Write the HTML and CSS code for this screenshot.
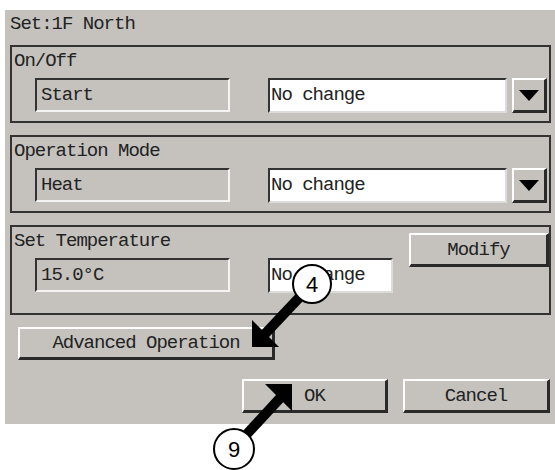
FILE: index.html
```html
<!DOCTYPE html>
<html lang="en">
<head>
    <meta charset="UTF-8">
    <title>Set: 1F North</title>
    <link rel="stylesheet" href="styles.css">
</head>
<body>
    <div class="screen">
        <div class="title">Set:1F North</div>

        <div class="group">
            <div class="group-label">On/Off</div>
            <div class="row">
                <div class="status">Start</div>
                <div class="select">No change</div>
                <div class="drop"><span class="tri"></span></div>
            </div>
        </div>

        <div class="group">
            <div class="group-label">Operation Mode</div>
            <div class="row">
                <div class="status">Heat</div>
                <div class="select">No change</div>
                <div class="drop"><span class="tri"></span></div>
            </div>
        </div>

        <div class="group group-temp">
            <div class="temp-main">
                <div class="group-label">Set Temperature</div>
                <div class="row">
                    <div class="status">15.0°C</div>
                    <div class="select select-short">No change</div>
                </div>
            </div>
            <button type="button" class="btn btn-modify">Modify</button>
        </div>

        <button type="button" class="btn btn-advanced">Advanced Operation</button>

        <div class="actions">
            <button type="button" class="btn btn-ok">OK</button>
            <button type="button" class="btn btn-cancel">Cancel</button>
        </div>
    </div>

    <!-- step callouts drawn over the screen -->
    <svg class="callouts" width="555" height="470" viewBox="0 0 555 470">
        <line x1="312" y1="284" x2="264" y2="335" stroke="#000" stroke-width="10"/>
        <polygon points="252,347 252,320 279,347" fill="#000"/>
        <circle cx="312" cy="284" r="19" fill="#fff" stroke="#000" stroke-width="2"/>
        <text x="312" y="292" text-anchor="middle" class="callout-num">4</text>

        <line x1="234" y1="448" x2="282" y2="396" stroke="#000" stroke-width="10"/>
        <polygon points="292,384 265,384 292,411" fill="#000"/>
        <circle cx="234" cy="449" r="20" fill="#fff" stroke="#000" stroke-width="2"/>
        <text x="234" y="457" text-anchor="middle" class="callout-num">9</text>
    </svg>
</body>
</html>
```

FILE: styles.css
```css
* {
    box-sizing: border-box;
}

body {
    margin: 0;
    background-color: #ffffff;
    position: relative;
    width: 555px;
    height: 470px;
    overflow: hidden;
    font-family: 'Liberation Mono', 'DejaVu Sans Mono', monospace;
    font-size: 19px;
    letter-spacing: -1px;
    color: #222222;
}

.screen {
    margin: 10px 0 0 5px;
    width: 550px;
    height: 414px;
    padding: 3px 4px 0 5px;
    background-color: #c5c2be;
}

.title {
    height: 22px;
    line-height: 22px;
    margin-bottom: 10px;
}

.group {
    height: 78px;
    border: 2px solid #333333;
    padding-top: 3px;
    margin-bottom: 12px;
}

.group-label {
    height: 22px;
    line-height: 22px;
    padding-left: 2px;
    margin-bottom: 6px;
}

.row {
    display: flex;
    align-items: center;
    padding-left: 23px;
    height: 34px;
}

.status {
    width: 195px;
    height: 34px;
    margin-right: 38px;
    padding-left: 4px;
    line-height: 30px;
    border-style: solid;
    border-width: 2px;
    border-color: #333333 #f4f4f4 #f4f4f4 #333333;
}

.select {
    width: 239px;
    height: 35px;
    margin-right: 5px;
    padding-left: 1px;
    line-height: 31px;
    background-color: #ffffff;
    border-style: solid;
    border-width: 2px;
    border-color: #333333 #dcdcdc #dcdcdc #333333;
}

.select-short {
    width: 125px;
}

.drop {
    width: 35px;
    height: 35px;
    display: flex;
    align-items: center;
    justify-content: center;
    border-style: solid;
    border-width: 2px 3px 3px 2px;
    border-color: #ffffff #2a2a2a #2a2a2a #ffffff;
}

.tri {
    width: 0;
    height: 0;
    margin-top: 2px;
    border-left: 10px solid transparent;
    border-right: 10px solid transparent;
    border-top: 11px solid #000000;
}

.group-temp {
    height: 90px;
    display: flex;
    align-items: flex-start;
}

.btn {
    font: inherit;
    letter-spacing: inherit;
    color: #222222;
    background-color: #c5c2be;
    border-style: solid;
    border-width: 2px 3px 3px 2px;
    border-color: #ffffff #2a2a2a #2a2a2a #ffffff;
    padding: 0;
    height: 34px;
    line-height: 28px;
    text-align: center;
}

.btn-modify {
    width: 142px;
    margin-top: 3px;
    margin-left: 11px;
}

.btn-advanced {
    display: block;
    width: 257px;
    height: 33px;
    margin: 3px 0 0 8px;
}

.actions {
    display: flex;
    justify-content: flex-end;
    gap: 15px;
    margin-top: 19px;
    padding-right: 1px;
}

.btn-ok {
    width: 146px;
}

.btn-cancel {
    width: 147px;
}

.callouts {
    position: absolute;
    top: 0;
    left: 0;
}

.callout-num {
    font-family: 'Liberation Sans', Arial, sans-serif;
    font-size: 22px;
    letter-spacing: 0;
    fill: #000000;
}
```
